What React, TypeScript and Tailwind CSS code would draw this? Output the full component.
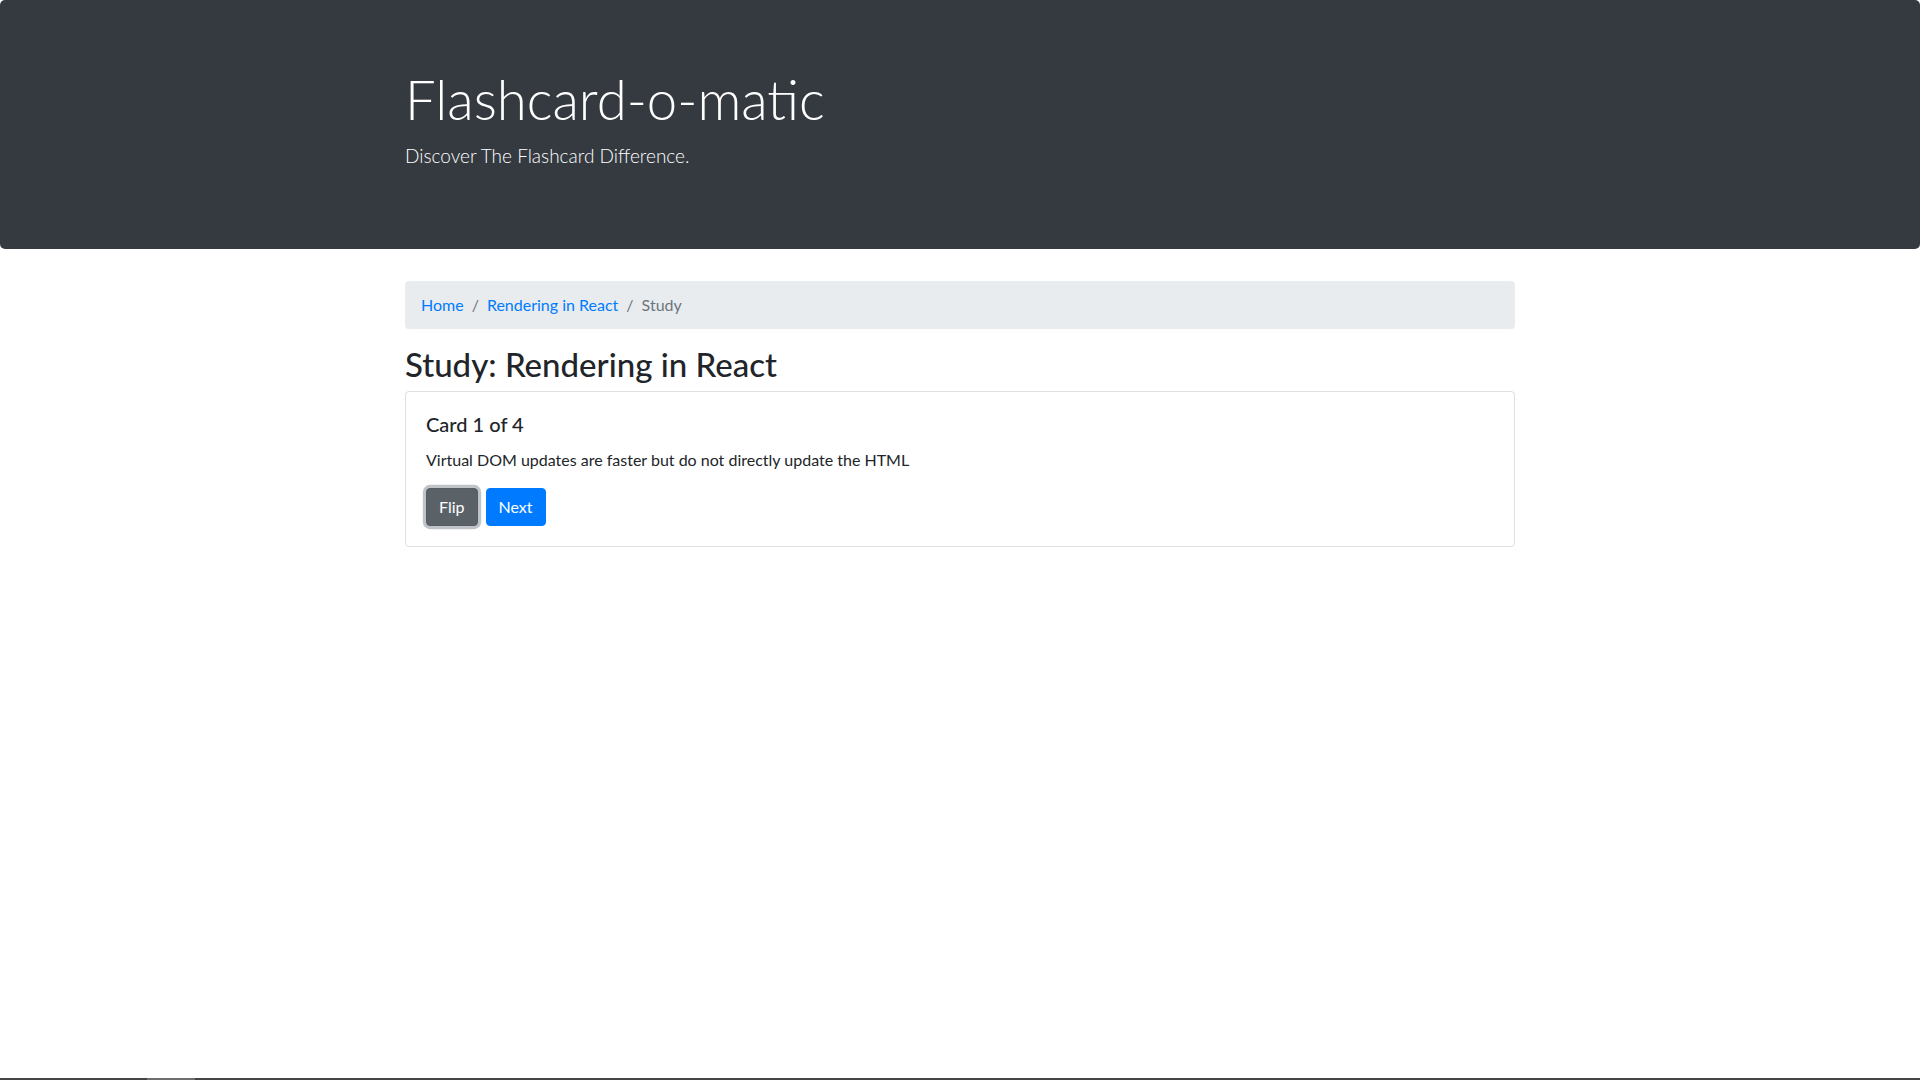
import React from "react";

export default function App() {
  return (
    <div className="min-h-screen flex flex-col bg-white font-['Lato',sans-serif] text-[#212529] text-base leading-normal">
      <div className="flex-1">
        <header className="bg-[#343a40] text-white rounded-[5px] pt-[66px] pb-[62px] mb-8">
          <div className="w-[1140px] mx-auto px-[15px]">
            <h1 className="text-[54.5px] font-light leading-[67.2px] mb-2">Flashcard-o-matic</h1>
            <p className="text-[19px] font-light leading-[30px] mb-4">Discover The Flashcard Difference.</p>
          </div>
        </header>
        <main className="w-[1140px] mx-auto px-[15px]">
          <nav aria-label="breadcrumb">
            <ol className="flex items-center bg-[#e9ecef] rounded py-3 px-4 mb-4">
              <li>
                <a href="#" className="text-[#007bff]">Home</a>
              </li>
              <li className="flex items-center text-[#6c757d]">
                <span className="px-2">/</span>
                <a href="#" className="text-[#007bff]">Rendering in React</a>
              </li>
              <li className="flex items-center text-[#6c757d]">
                <span className="px-2">/</span>
                <span>Study</span>
              </li>
            </ol>
          </nav>
          <h2 className="text-[33px] font-medium leading-[38.4px] mb-[7px]">Study: Rendering in React</h2>
          <div className="border border-[rgba(0,0,0,0.125)] rounded">
            <div className="p-5">
              <h5 className="text-xl font-medium leading-[1.2] mb-3">Card 1 of 4</h5>
              <p className="mb-4">Virtual DOM updates are faster but do not directly update the HTML</p>
              <div className="flex">
                <button className="bg-[#5a6268] border border-[#545b62] text-white rounded px-3 py-1.5 leading-normal mr-2 shadow-[0_0_0_3.2px_rgba(130,138,145,0.5)]">
                  Flip
                </button>
                <button className="bg-[#007bff] border border-[#007bff] text-white rounded px-3 py-1.5 leading-normal">
                  Next
                </button>
              </div>
            </div>
          </div>
        </main>
      </div>
      <footer className="h-[2px] bg-[#454545] flex">
        <div className="ml-[147px] w-[48px] h-full bg-[#6e6e6e]" />
      </footer>
    </div>
  );
}
